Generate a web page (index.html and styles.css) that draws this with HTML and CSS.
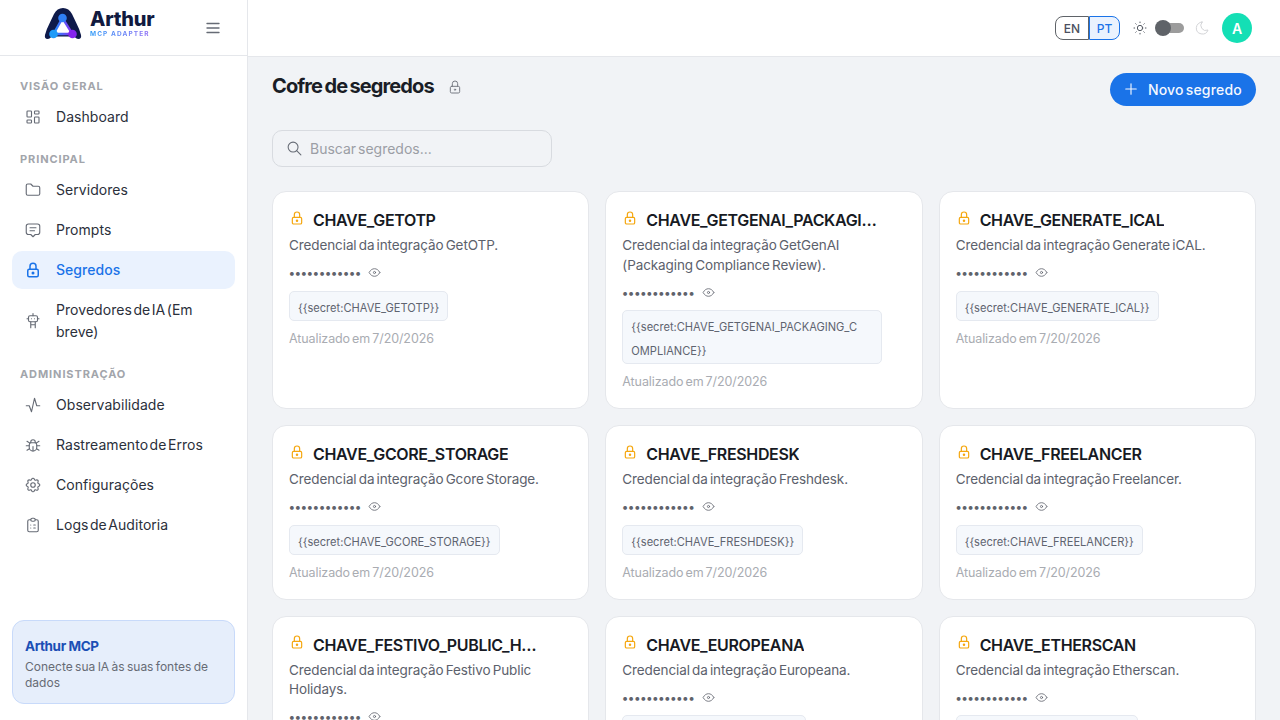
FILE: index.html
```html
<!DOCTYPE html>
<html lang="pt">
  <head>
    <meta charset="UTF-8" />
    <meta name="viewport" content="width=device-width, initial-scale=1.0" />
    <title>Cofre de segredos</title>
    <link rel="stylesheet" href="styles.css">
  </head>
  <body>
    <svg class="defs" width="0" height="0">
      <symbol id="i-lock" viewBox="0 0 24 24"><rect x="5" y="11" width="14" height="10" rx="2"/><circle cx="12" cy="16" r="1"/><path d="M8 11V7a4 4 0 0 1 8 0v4"/></symbol>
      <symbol id="i-eye" viewBox="0 0 24 24"><circle cx="12" cy="12" r="2"/><path d="M22 12c-2.7 4.700-6 7-10 7s-7.300-2.300-10-7c2.700-4.700 6-7 10-7s7.300 2.300 10 7"/></symbol>
    </svg>

    <aside class="sidebar">
      <div class="brand">
        <svg class="logo" viewBox="0 0 38 32" width="38" height="32">
          <defs>
            <linearGradient id="tri" x1="0" y1="0" x2="1" y2="0"><stop offset="0" stop-color="#1e90ff"/><stop offset="1" stop-color="#8b2ff0"/></linearGradient>
          </defs>
          <path d="M1 27C3 19 7 13 10 6C12 2 15 0 19 0s7 2 9 6c3 7 7 13 9 21c.6 2.500-.6 4-2.500 4c-2 0-3-1-4-2.500H7.500c-1 1.500-2 2.500-4 2.500C1.600 31 .4 29.500 1 27z" fill="#0e1a4a"/>
          <path d="M18.500 10L9.500 26H28.500Z" fill="#fff" stroke="url(#tri)" stroke-width="2.400"/>
          <circle cx="18.500" cy="10" r="4.300" fill="#2f7ff5"/>
          <circle cx="9.500" cy="26" r="4.300" fill="#1e9bf8"/>
          <circle cx="28.500" cy="26" r="4.300" fill="#8424ee"/>
        </svg>
        <div class="brand-text">
          <span class="brand-name">Arthur</span>
          <span class="brand-sub">MCP ADAPTER</span>
        </div>
        <svg class="ico hamburger" viewBox="0 0 24 24" width="18" height="18"><path d="M4 6h16M4 12h16M4 18h16"/></svg>
      </div>

      <nav class="nav">
        <div class="nav-label">VISÃO GERAL</div>
        <a class="nav-item">
          <svg class="ico" viewBox="0 0 24 24" width="18" height="18"><rect x="4" y="4" width="6" height="8" rx="1"/><rect x="4" y="16" width="6" height="4" rx="1"/><rect x="14" y="12" width="6" height="8" rx="1"/><rect x="14" y="4" width="6" height="4" rx="1"/></svg>
          <span>Dashboard</span>
        </a>

        <div class="nav-label">PRINCIPAL</div>
        <a class="nav-item">
          <svg class="ico" viewBox="0 0 24 24" width="18" height="18"><path d="M5 4h4l3 3h7a2 2 0 0 1 2 2v8a2 2 0 0 1-2 2H5a2 2 0 0 1-2-2V6a2 2 0 0 1 2-2"/></svg>
          <span>Servidores</span>
        </a>
        <a class="nav-item">
          <svg class="ico" viewBox="0 0 24 24" width="18" height="18"><path d="M8 9h8M8 13h6"/><path d="M9 18H6a3 3 0 0 1-3-3V7a3 3 0 0 1 3-3h12a3 3 0 0 1 3 3v8a3 3 0 0 1-3 3h-3l-3 3z"/></svg>
          <span>Prompts</span>
        </a>
        <a class="nav-item active">
          <svg class="ico" width="18" height="18"><use href="#i-lock"/></svg>
          <span>Segredos</span>
        </a>
        <a class="nav-item">
          <svg class="ico" viewBox="0 0 24 24" width="18" height="18"><rect x="6" y="5" width="12" height="8" rx="2"/><path d="M4 9h2M18 9h2M10 9h.01M14 9h.01M9 13v8M15 13v8M9 17h6M12 2v3"/></svg>
          <span>Provedores de IA (Em breve)</span>
        </a>

        <div class="nav-label">ADMINISTRAÇÃO</div>
        <a class="nav-item">
          <svg class="ico" viewBox="0 0 24 24" width="18" height="18"><path d="M3 13h4l3 8 4-18 3 10h4"/></svg>
          <span>Observabilidade</span>
        </a>
        <a class="nav-item">
          <svg class="ico" viewBox="0 0 24 24" width="18" height="18"><path d="M9 9V8a3 3 0 0 1 6 0v1"/><path d="M8 9h8a6 6 0 0 1 1 3v3a5 5 0 0 1-10 0v-3a6 6 0 0 1 1-3"/><path d="M3 13h4M17 13h4M12 20v-6M4 19l3.300-2M20 19l-3.300-2M4 7l3.800 2.500M20 7l-3.800 2.500"/></svg>
          <span>Rastreamento de Erros</span>
        </a>
        <a class="nav-item">
          <svg class="ico" viewBox="0 0 24 24" width="18" height="18"><path d="M10.300 4.300c.4-1.800 3-1.800 3.400 0a1.700 1.700 0 0 0 2.600 1.100c1.500-.9 3.300.8 2.400 2.400a1.700 1.700 0 0 0 1 2.500c1.800.4 1.800 3 0 3.400a1.700 1.700 0 0 0-1 2.600c.9 1.500-.9 3.300-2.400 2.400a1.700 1.700 0 0 0-2.600 1c-.4 1.800-3 1.800-3.400 0a1.700 1.700 0 0 0-2.600-1c-1.500.9-3.300-.9-2.400-2.400a1.700 1.700 0 0 0-1-2.600c-1.800-.4-1.800-3 0-3.400a1.700 1.700 0 0 0 1-2.500c-.9-1.600.9-3.300 2.400-2.400c1 .6 2.300.1 2.600-1.100z"/><circle cx="12" cy="12" r="3"/></svg>
          <span>Configurações</span>
        </a>
        <a class="nav-item">
          <svg class="ico" viewBox="0 0 24 24" width="18" height="18"><path d="M9 5H7a2 2 0 0 0-2 2v12a2 2 0 0 0 2 2h10a2 2 0 0 0 2-2V7a2 2 0 0 0-2-2h-2"/><rect x="9" y="3" width="6" height="4" rx="2"/><path d="M9 12h.01M13 12h2M9 16h.01M13 16h2"/></svg>
          <span>Logs de Auditoria</span>
        </a>
      </nav>

      <div class="promo">
        <div class="promo-title">Arthur MCP</div>
        <div class="promo-text">Conecte sua IA às suas fontes de dados</div>
      </div>
    </aside>

    <div class="page">
      <header class="topbar">
        <div class="lang">
          <button class="lang-btn">EN</button>
          <button class="lang-btn on">PT</button>
        </div>
        <svg class="ico sun" viewBox="0 0 24 24" width="16" height="16"><circle cx="12" cy="12" r="4"/><path d="M3 12h1M12 3v1M20 12h1M12 20v1M5.600 5.600l.7.7M18.400 5.600l-.7.7M17.700 17.700l.7.7M6.300 17.700l-.7.7"/></svg>
        <div class="switch"><span class="knob"></span></div>
        <svg class="ico moon" viewBox="0 0 24 24" width="16" height="16"><path d="M12 3h.4a7.500 7.500 0 0 0 8.600 12A9 9 0 1 1 12 3z"/></svg>
        <div class="avatar">A</div>
      </header>

      <main class="content">
        <div class="page-head">
          <div class="page-title">
            <h1>Cofre de segredos</h1>
            <svg class="ico" width="16" height="16"><use href="#i-lock"/></svg>
          </div>
          <button class="btn-new">
            <svg class="ico" viewBox="0 0 24 24" width="18" height="18"><path d="M12 5v14M5 12h14"/></svg>
            Novo segredo
          </button>
        </div>

        <div class="search">
          <svg class="ico" viewBox="0 0 24 24" width="17" height="17"><circle cx="10" cy="10" r="7"/><path d="M21 21l-6-6"/></svg>
          <span>Buscar segredos...</span>
        </div>

        <div class="grid">
          <div class="card">
            <div class="card-head"><svg class="ico lock" width="16" height="16"><use href="#i-lock"/></svg><h3>CHAVE_GETOTP</h3></div>
            <p class="desc">Credencial da integração GetOTP.</p>
            <div class="mask"><span class="dots">••••••••••••</span><svg class="ico" width="13" height="13"><use href="#i-eye"/></svg></div>
            <code class="chip">{{secret:CHAVE_GETOTP}}</code>
            <div class="updated">Atualizado em 7/20/2026</div>
          </div>
          <div class="card">
            <div class="card-head"><svg class="ico lock" width="16" height="16"><use href="#i-lock"/></svg><h3>CHAVE_GETGENAI_PACKAGING_COMPLIANCE</h3></div>
            <p class="desc">Credencial da integração GetGenAI (Packaging Compliance Review).</p>
            <div class="mask"><span class="dots">••••••••••••</span><svg class="ico" width="13" height="13"><use href="#i-eye"/></svg></div>
            <code class="chip long">{{secret:CHAVE_GETGENAI_PACKAGING_COMPLIANCE}}</code>
            <div class="updated">Atualizado em 7/20/2026</div>
          </div>
          <div class="card">
            <div class="card-head"><svg class="ico lock" width="16" height="16"><use href="#i-lock"/></svg><h3>CHAVE_GENERATE_ICAL</h3></div>
            <p class="desc">Credencial da integração Generate iCAL.</p>
            <div class="mask"><span class="dots">••••••••••••</span><svg class="ico" width="13" height="13"><use href="#i-eye"/></svg></div>
            <code class="chip">{{secret:CHAVE_GENERATE_ICAL}}</code>
            <div class="updated">Atualizado em 7/20/2026</div>
          </div>
          <div class="card">
            <div class="card-head"><svg class="ico lock" width="16" height="16"><use href="#i-lock"/></svg><h3>CHAVE_GCORE_STORAGE</h3></div>
            <p class="desc">Credencial da integração Gcore Storage.</p>
            <div class="mask"><span class="dots">••••••••••••</span><svg class="ico" width="13" height="13"><use href="#i-eye"/></svg></div>
            <code class="chip">{{secret:CHAVE_GCORE_STORAGE}}</code>
            <div class="updated">Atualizado em 7/20/2026</div>
          </div>
          <div class="card">
            <div class="card-head"><svg class="ico lock" width="16" height="16"><use href="#i-lock"/></svg><h3>CHAVE_FRESHDESK</h3></div>
            <p class="desc">Credencial da integração Freshdesk.</p>
            <div class="mask"><span class="dots">••••••••••••</span><svg class="ico" width="13" height="13"><use href="#i-eye"/></svg></div>
            <code class="chip">{{secret:CHAVE_FRESHDESK}}</code>
            <div class="updated">Atualizado em 7/20/2026</div>
          </div>
          <div class="card">
            <div class="card-head"><svg class="ico lock" width="16" height="16"><use href="#i-lock"/></svg><h3>CHAVE_FREELANCER</h3></div>
            <p class="desc">Credencial da integração Freelancer.</p>
            <div class="mask"><span class="dots">••••••••••••</span><svg class="ico" width="13" height="13"><use href="#i-eye"/></svg></div>
            <code class="chip">{{secret:CHAVE_FREELANCER}}</code>
            <div class="updated">Atualizado em 7/20/2026</div>
          </div>
          <div class="card">
            <div class="card-head"><svg class="ico lock" width="16" height="16"><use href="#i-lock"/></svg><h3>CHAVE_FESTIVO_PUBLIC_HOLIDAYS</h3></div>
            <p class="desc">Credencial da integração Festivo Public Holidays.</p>
            <div class="mask"><span class="dots">••••••••••••</span><svg class="ico" width="13" height="13"><use href="#i-eye"/></svg></div>
            <code class="chip">{{secret:CHAVE_FESTIVO_PUBLIC_HOLIDAYS}}</code>
            <div class="updated">Atualizado em 7/20/2026</div>
          </div>
          <div class="card">
            <div class="card-head"><svg class="ico lock" width="16" height="16"><use href="#i-lock"/></svg><h3>CHAVE_EUROPEANA</h3></div>
            <p class="desc">Credencial da integração Europeana.</p>
            <div class="mask"><span class="dots">••••••••••••</span><svg class="ico" width="13" height="13"><use href="#i-eye"/></svg></div>
            <code class="chip">{{secret:CHAVE_EUROPEANA}}</code>
            <div class="updated">Atualizado em 7/20/2026</div>
          </div>
          <div class="card">
            <div class="card-head"><svg class="ico lock" width="16" height="16"><use href="#i-lock"/></svg><h3>CHAVE_ETHERSCAN</h3></div>
            <p class="desc">Credencial da integração Etherscan.</p>
            <div class="mask"><span class="dots">••••••••••••</span><svg class="ico" width="13" height="13"><use href="#i-eye"/></svg></div>
            <code class="chip">{{secret:CHAVE_ETHERSCAN}}</code>
            <div class="updated">Atualizado em 7/20/2026</div>
          </div>
        </div>
      </main>
    </div>
  </body>
</html>
```

FILE: styles.css
```css
* {
  box-sizing: border-box;
}
html,
body {
  height: 100%;
}
body {
  margin: 0;
  display: flex;
  height: 720px;
  overflow: hidden;
  background: #f1f3f6;
  color: #1c2130;
  font-family: "Inter", "Liberation Sans", sans-serif;
}
.defs {
  position: absolute;
}
.ico {
  flex: none;
  fill: none;
  stroke: currentColor;
  stroke-width: 1.5;
  stroke-linecap: round;
  stroke-linejoin: round;
}

/* sidebar */
.sidebar {
  width: 248px;
  flex: none;
  display: flex;
  flex-direction: column;
  background: #fff;
  border-right: 1px solid #e5e7eb;
}
.brand {
  height: 56px;
  flex: none;
  display: flex;
  align-items: center;
  padding: 0 25px 0 44px;
  border-bottom: 1px solid #e5e7eb;
}
.logo {
  flex: none;
  margin-top: -7px;
}
.brand-text {
  display: flex;
  flex-direction: column;
  margin: -10px 0 0 8px;
}
.brand-name {
  font-size: 20px;
  line-height: 22px;
  font-weight: 800;
  letter-spacing: -0.2px;
  color: #111a3f;
}
.brand-sub {
  font-size: 6.5px;
  line-height: 8px;
  font-weight: 700;
  letter-spacing: 1.1px;
  background: linear-gradient(90deg, #2f9bf8, #9a6cf5);
  -webkit-background-clip: text;
  background-clip: text;
  color: transparent;
}
.hamburger {
  margin-left: auto;
  color: #666b75;
  stroke-width: 1.8;
}
.nav {
  flex: 1;
  padding: 22px 12px 0;
}
.nav-label {
  height: 16px;
  margin: 15px 8px 4px;
  font-size: 11px;
  line-height: 16px;
  font-weight: 700;
  letter-spacing: 0.9px;
  color: #a2a5ab;
}
.nav-label:first-child {
  margin-top: 0;
}
.nav-item {
  display: flex;
  align-items: center;
  gap: 14px;
  padding: 8px 12px;
  margin-bottom: 2px;
  border-radius: 10px;
  font-size: 14px;
  line-height: 22px;
  font-weight: 400;
  letter-spacing: 0.05px;
  word-spacing: -2.5px;
  color: #2b303b;
}
.nav-item .ico {
  color: #666b75;
}
.nav-item.active {
  background: #eaf2fe;
  color: #1a73e8;
  font-weight: 500;
}
.nav-item.active .ico {
  color: #1a73e8;
  stroke-width: 2;
}
.promo {
  margin: 0 12px 16px;
  height: 84px;
  padding: 16px 12px;
  background: #e6eefb;
  border: 1px solid #c8dafa;
  border-radius: 12px;
}
.promo-title {
  font-size: 13.5px;
  line-height: 18px;
  font-weight: 700;
  letter-spacing: -0.4px;
  color: #1b4fb5;
}
.promo-text {
  margin-top: 4px;
  font-size: 12px;
  line-height: 16px;
  word-spacing: -1px;
  color: #666b75;
}

/* top bar */
.page {
  flex: 1;
  min-width: 0;
  display: flex;
  flex-direction: column;
}
.topbar {
  height: 57px;
  flex: none;
  display: flex;
  align-items: center;
  padding: 0 28px 0 0;
  background: #fff;
  border-bottom: 1px solid #e5e7eb;
  justify-content: flex-end;
}
.lang {
  display: flex;
}
.lang-btn {
  width: 34px;
  height: 24px;
  padding: 0;
  background: #fff;
  border: 1px solid #5f6368;
  border-radius: 8px 0 0 8px;
  font: 500 12px "Inter", sans-serif;
  color: #4b5060;
}
.lang-btn.on {
  width: 31px;
  background: #eaf2fe;
  border: 1px solid #1a73e8;
  border-radius: 0 8px 8px 0;
  color: #1a73e8;
}
.sun {
  margin-left: 12px;
  color: #555a63;
}
.switch {
  position: relative;
  width: 25px;
  height: 10px;
  margin-left: 11px;
  background: #9c9c9c;
  border-radius: 5px;
}
.knob {
  position: absolute;
  left: -4px;
  top: -3px;
  width: 16px;
  height: 16px;
  border-radius: 50%;
  background: #5f6368;
}
.moon {
  margin-left: 10px;
  color: #d4d5d8;
}
.avatar {
  width: 30px;
  height: 30px;
  margin-left: 12px;
  display: flex;
  align-items: center;
  justify-content: center;
  border-radius: 50%;
  background: #14dfb5;
  color: #fff;
  font-size: 14px;
  font-weight: 600;
}

/* content */
.content {
  flex: 1;
  min-height: 0;
  padding: 16px 24px 0;
}
.page-head {
  display: flex;
  align-items: flex-start;
  justify-content: space-between;
  height: 57px;
}
.page-title {
  display: flex;
  align-items: center;
  gap: 13px;
  height: 27px;
}
.page-title .ico {
  color: #777b84;
}
h1 {
  margin: 0;
  font-size: 20px;
  line-height: 27px;
  font-weight: 700;
  letter-spacing: -0.9px;
  word-spacing: -1.5px;
  color: #1a1d26;
}
.btn-new {
  display: flex;
  align-items: center;
  gap: 8px;
  height: 33px;
  padding: 0 14px 1px 12px;
  border: 0;
  border-radius: 17px;
  background: #1a73e8;
  color: #f4f8ff;
  font: 500 14px "Inter", sans-serif;
  letter-spacing: 0.2px;
  word-spacing: -2px;
}
.search {
  display: flex;
  align-items: center;
  gap: 7px;
  width: 280px;
  height: 37px;
  padding: 0 13px;
  border: 1px solid #d8dbe0;
  border-radius: 10px;
  font-size: 14px;
  word-spacing: -2px;
  color: #9b9ea5;
}
.search .ico {
  color: #666b75;
}
.grid {
  display: grid;
  grid-template-columns: repeat(3, minmax(0, 1fr));
  gap: 16px;
  margin-top: 24px;
}
.card {
  display: flex;
  flex-direction: column;
  align-items: flex-start;
  padding: 16px 16px 17px;
  background: #fff;
  border: 1px solid #e5e7eb;
  border-radius: 14px;
}
.card-head {
  display: flex;
  align-items: center;
  gap: 8px;
  width: 100%;
  height: 24px;
  padding-right: 27px;
}
.card-head .lock {
  color: #f5a70f;
  margin-top: -5px;
  stroke-width: 1.8;
}
h3 {
  margin: 0;
  min-width: 0;
  font-size: 16px;
  line-height: 24px;
  font-weight: 600;
  letter-spacing: -0.35px;
  color: #171a23;
  white-space: nowrap;
  overflow: hidden;
  text-overflow: ellipsis;
}
.desc {
  margin: 4px 0 0;
  font-size: 13.5px;
  line-height: 19.5px;
  letter-spacing: -0.1px;
  word-spacing: -1.5px;
  color: #5c616c;
}
.mask {
  display: flex;
  align-items: center;
  gap: 7px;
  height: 18px;
  margin-top: 8px;
  color: #5f636c;
}
.dots {
  font-size: 12px;
  letter-spacing: 0.34px;
  font-weight: 700;
}
.chip {
  display: block;
  max-width: 260px;
  margin-top: 9px;
  padding: 4px 8px 0;
  background: #f5f8fc;
  border: 1px solid #e5e9f0;
  border-radius: 5px;
  font-family: "Inter", sans-serif;
  font-size: 11.1px;
  line-height: 24px;
  color: #5f6470;
  word-break: break-all;
}
.chip.long {
  padding-right: 16px;
}
.updated {
  margin-top: 9px;
  font-size: 12.5px;
  line-height: 18px;
  letter-spacing: -0.1px;
  word-spacing: -1.3px;
  color: #a9acb2;
}
```
